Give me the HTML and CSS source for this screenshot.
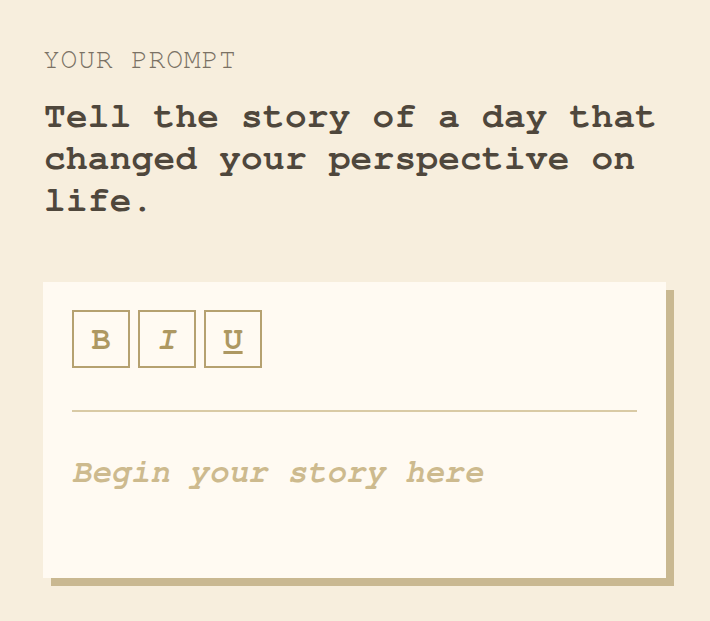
FILE: index.html
```html
<!DOCTYPE html>
<html>
<head>
<meta charset="utf-8">
<link rel="stylesheet" href="styles.css">
</head>
<body>
<main class="page">
  <div class="label">YOUR PROMPT</div>
  <h1 class="prompt">Tell the story of a day that changed your perspective on life.</h1>
  <section class="card">
    <div class="toolbar">
      <button class="tool tool-b">B</button>
      <button class="tool tool-i">I</button>
      <button class="tool tool-u">U</button>
    </div>
    <hr class="divider">
    <div class="editor"><span class="placeholder">Begin your story here</span></div>
  </section>
</main>
</body>
</html>
```
FILE: styles.css
```css
html, body {
  margin: 0;
  padding: 0;
  background: #f7eedd;
}
body {
  font-family: "FreeMono", "Courier New", monospace;
}
.page {
  padding: 44px 44px 40px 43px;
}
.label {
  font-size: 28px;
  line-height: 32px;
  letter-spacing: 0.8px;
  color: #7a7164;
  margin: 0;
}
.prompt {
  margin: 19px 0 0 1px;
  font-size: 36px;
  line-height: 42px;
  letter-spacing: 0.3px;
  font-weight: bold;
  color: #4f473c;
}
.card {
  margin-top: 61px;
  width: 623px;
  box-sizing: border-box;
  background: #fffaf2;
  box-shadow: 8px 8px 0 #c9b891;
  padding: 28px 29px 0 29px;
  height: 296px;
}
.toolbar {
  display: flex;
  gap: 8px;
}
.tool {
  width: 58px;
  height: 58px;
  box-sizing: border-box;
  border: 2px solid #b5a170;
  background: transparent;
  color: #ad9862;
  font-family: "FreeMono", "Courier New", monospace;
  font-size: 32px;
  font-weight: bold;
  padding: 0;
}
.tool-i { font-style: italic; }
.tool-u { text-decoration: underline; }
.divider {
  border: 0;
  border-top: 2px solid #d9caa5;
  margin: 42px 0 0 0;
}
.editor {
  padding-top: 44px;
}
.placeholder {
  font-size: 32px;
  letter-spacing: 0.4px;
  font-weight: bold;
  font-style: italic;
  color: #cdba8e;
}
```
